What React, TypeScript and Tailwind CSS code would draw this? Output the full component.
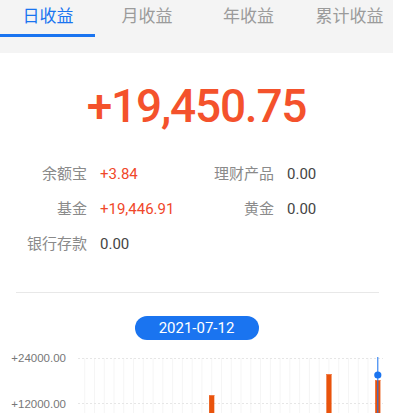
import React from "react";

const tabs = [
  { label: "日收益", w: "w-[96px]" },
  { label: "月收益", w: "w-[102px]" },
  { label: "年收益", w: "w-[101px]" },
  { label: "累计收益", w: "flex-1 pl-[7px]" },
];

const rows: [string, string, boolean][] = [
  ["余额宝", "+3.84", true],
  ["理财产品", "0.00", false],
  ["基金", "+19,446.91", true],
  ["黄金", "0.00", false],
  ["银行存款", "0.00", false],
];

const bars: Record<number, number> = { 13: 45, 25: 24, 30: 30 };

function Chart() {
  const xs = Array.from({ length: 31 }, (_, k) => 6.7 + 9.77 * k);
  return (
    <svg width="315" height="63" viewBox="0 0 315 63" className="block">
      {xs.map((x, k) => (
        <line key={k} x1={x} y1={8} x2={x} y2={63} stroke="#f5f5f5" strokeWidth="1" />
      ))}
      <line x1="0" y1="8.5" x2="305" y2="8.5" stroke="#e6e6e6" strokeDasharray="2 2" />
      <line x1="0" y1="53.5" x2="305" y2="53.5" stroke="#e6e6e6" strokeDasharray="2 2" />
      {Object.entries(bars).map(([k, top]) => {
        const x = xs[Number(k)];
        return (
          <g key={k}>
            <rect x={x - 2.6} y={top} width="5.2" height={63 - top} fill="#e9530c" />
            <rect x={x - 2.6} y={top} width="5.2" height="1" fill="#f07a45" />
          </g>
        );
      })}
      <line x1={xs[30]} y1="7" x2={xs[30]} y2="63" stroke="#1a74f0" strokeWidth="1" />
      <circle cx={xs[30]} cy="25" r="3.6" fill="#1a74f0" />
    </svg>
  );
}

export default function App() {
  return (
    <div className="w-[393px] h-[413px] overflow-hidden bg-white font-['Roboto','Noto_Sans_CJK_SC',sans-serif]">
      <div className="bg-[#f4f4f4] pb-[16px]">
        <div className="flex h-[37px]">
          {tabs.map((t, i) => (
            <div key={t.label} className={`${t.w} relative flex justify-center`}>
              <span
                className={`pt-[5px] text-[17px] leading-[22px] ${
                  i === 0 ? "text-[#1a74f0]" : "text-[#9b9b9b]"
                }`}
              >
                {t.label}
              </span>
              {i === 0 && (
                <span className="absolute bottom-0 left-0 h-[3px] w-[95px] bg-[#1a74f0]" />
              )}
            </div>
          ))}
        </div>
      </div>

      <div className="pt-[29px] text-center text-[46px] font-medium leading-[48px] tracking-[-1.2px] text-[#f4522c]">
        +19,450.75
      </div>

      <div className="mt-[27px] grid grid-cols-[187px_1fr] text-[15px] leading-[35px]">
        {rows.map(([label, value, red]) => (
          <div key={label} className="flex">
            <span className="w-[87px] text-right text-[#8a8a8a]">{label}</span>
            <span className={`ml-[13px] ${red ? "text-[#f0472a]" : "text-[#444]"}`}>{value}</span>
          </div>
        ))}
      </div>

      <div className="mt-[30px] ml-4 mr-[14px] h-px bg-[#e8e8e8]" />

      <div className="mt-[23px] flex justify-center">
        <div className="flex h-[24px] w-[124px] items-center justify-center rounded-full bg-[#1a74f0] text-[15px] text-white">
          2021-07-12
        </div>
      </div>

      <div className="mt-[10px] flex">
        <div className="w-[78px] pr-[12px] text-right font-['Liberation_Sans',sans-serif] text-[11.5px] leading-[16px] text-[#777]">
          <div>+24000.00</div>
          <div className="mt-[30px]">+12000.00</div>
        </div>
        <Chart />
      </div>
    </div>
  );
}
